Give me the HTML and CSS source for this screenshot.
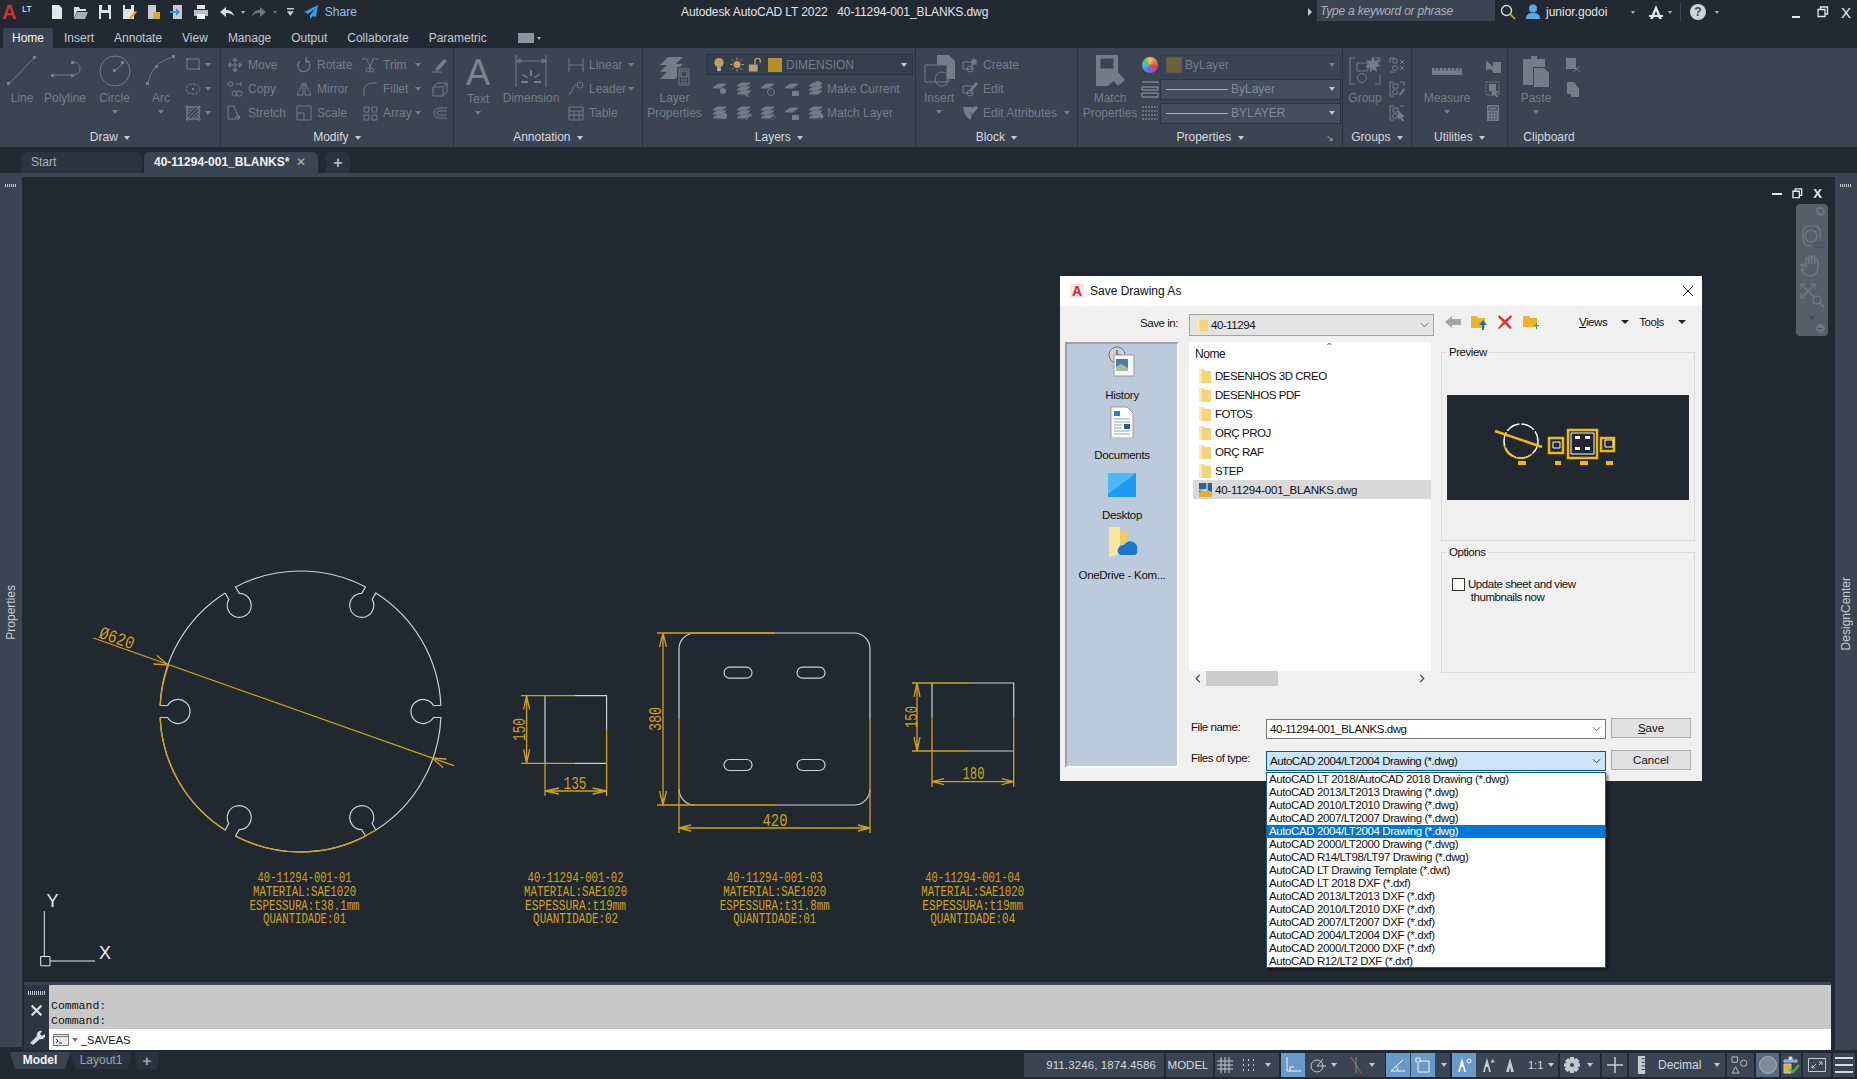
FILE: index.html
```html
<!DOCTYPE html>
<html lang="en">
<head>
  <meta charset="UTF-8" />
  <title>Autodesk AutoCAD LT 2022 - 40-11294-001_BLANKS.dwg</title>
  <link rel="stylesheet" href="styles.css">
</head>
<body>
  <svg class="defs" width="0" height="0">
    <symbol id="folder" viewBox="0 0 14 16">
      <path d="M1 1h5l1 2h6v12H1z" fill="#f7dc85"/>
      <path d="M1 1h3v14H1z" fill="#fbeab0"/>
      <path d="M4 3h9v12H4z" fill="#f5d577"/>
    </symbol>
    <symbol id="layer" viewBox="0 0 16 16">
      <path d="M1 7l5-4h8l-5 4z" fill="#727b88"/>
    </symbol>
    <symbol id="stack" viewBox="0 0 16 16">
      <path d="M1 5l4-3h9l-4 3zM1 9l4-3h9l-4 3zM1 13l4-3h9l-4 3z" fill="#727b88"/>
    </symbol>
  </svg>

  <!-- title bar -->
  <div class="titlebar">
    <div class="tb-left">
      <span class="logo-a">A</span><span class="logo-lt">LT</span>
      <div class="qat">
        <svg class="qi" viewBox="0 0 16 16"><path d="M3 1h7l3 3v11H3z" fill="#e3e5e8"/></svg>
        <svg class="qi" viewBox="0 0 16 16"><path d="M1 3h5l1 2h6v2H4l-3 7z" fill="#dfe1e4"/><path d="M4 8h11l-3 7H1z" fill="#a7adb5"/></svg>
        <svg class="qi" viewBox="0 0 16 16"><path d="M2 1h12v14H2z" fill="#dfe1e4"/><path d="M5 1h6v5H5zM4 9h8v6H4z" fill="#232a35"/></svg>
        <svg class="qi" viewBox="0 0 16 16"><path d="M2 1h11v14H2z" fill="#dfe1e4"/><path d="M4 1h6v4H4z" fill="#232a35"/><path d="M8 14l6-7 2 1-6 7z" fill="#e0a030"/></svg>
        <svg class="qi" viewBox="0 0 16 16"><path d="M3 1h8v14H3z" fill="#c7cbd0"/><path d="M8 8h7v7H8z" fill="#e2a72e"/></svg>
        <svg class="qi" viewBox="0 0 16 16"><path d="M4 1h9v14H4z" fill="#c7cbd0"/><path d="M1 7h6V4l4 4-4 4V9H1z" fill="#3d8fd6"/></svg>
        <svg class="qi" viewBox="0 0 16 16"><path d="M4 1h8v4H4z" fill="#e6e8ea"/><path d="M1 6h14v6H1z" fill="#b9bec5"/><path d="M4 10h8v5H4z" fill="#eef0f2"/></svg>
      </div>
      <svg class="qi undo" viewBox="0 0 16 16"><path d="M1 8l6-5v3c4 0 7 2 8 6-2-2-4-3-8-3v4z" fill="#d8dbdf"/></svg><span class="tri small"></span>
      <svg class="qi redo" viewBox="0 0 16 16"><path d="M15 8L9 3v3C5 6 2 8 1 12c2-2 4-3 8-3v4z" fill="#6d7581"/></svg><span class="tri small dim"></span>
      <span class="qat-more"></span>
      <svg class="qi share-ic" viewBox="0 0 16 16"><path d="M15 1L1 8l4 2 8-6-6 7v4l3-3 3 1z" fill="#3d9be0"/></svg>
      <span class="share">Share</span>
    </div>
    <div class="tb-title">Autodesk AutoCAD LT 2022 &nbsp; 40-11294-001_BLANKS.dwg</div>
    <div class="tb-right">
      <span class="tri-right"></span>
      <div class="search">Type a keyword or phrase</div>
      <svg class="qi mag" viewBox="0 0 16 16"><circle cx="6.5" cy="6.5" r="5" fill="none" stroke="#d8dbdf" stroke-width="1.4"/><path d="M10 10l5 5" stroke="#e0a030" stroke-width="1.6"/></svg>
      <svg class="qi user" viewBox="0 0 16 16"><circle cx="8" cy="4.5" r="4" fill="#5aa9e6"/><path d="M1 15c0-5 3-6 7-6s7 1 7 6z" fill="#5aa9e6"/></svg>
      <span class="username">junior.godoi</span>
      <span class="tri small user-tri"></span>
      <svg class="qi acad" viewBox="0 0 16 16"><path d="M8 1l6 14h-3L8 7l-3 8H2z" fill="#e3e5e8"/><path d="M1 11h14v2H1z" fill="#e3e5e8"/></svg>
      <span class="tri small"></span>
      <span class="tb-sep"></span>
      <span class="help">?</span>
      <span class="tri small"></span>
      <span class="win-min"></span>
      <svg class="win-res" viewBox="0 0 12 12"><path d="M3.5 3V1h7v7H8.5M1 3.5h7v7H1z" fill="none" stroke="#e3e5e8" stroke-width="1.3"/></svg>
      <span class="win-close">X</span>
    </div>
  </div>

  <!-- ribbon tabs -->
  <div class="rtabs">
    <span class="rtab active">Home</span>
    <span class="rtab">Insert</span>
    <span class="rtab">Annotate</span>
    <span class="rtab">View</span>
    <span class="rtab">Manage</span>
    <span class="rtab">Output</span>
    <span class="rtab">Collaborate</span>
    <span class="rtab">Parametric</span>
    <span class="rtab-btn"><span class="rtab-btn-box"></span><span class="tri small"></span></span>
  </div>

  <!-- ribbon -->
  <div class="ribbon">
    <section class="panel p-draw">
      <div class="panel-body">
        <div class="big w-44">
          <svg viewBox="0 0 32 32"><path d="M3 29L28 3"/><path class="solid" d="M1 27h3v3H1zM27 1h3v3h-3z"/></svg>
          <span>Line</span>
        </div>
        <div class="big w-42">
          <svg viewBox="0 0 32 32"><path d="M4 20h20c5 0 7-3 7-6s-2-7-7-7"/><path class="solid" d="M2 19h3v3H2zM22 19h3v3h-3zM22 6h3v3h-3z"/></svg>
          <span>Polyline</span>
        </div>
        <div class="big w-57">
          <svg viewBox="0 0 32 32"><circle cx="16" cy="16" r="15"/><path d="M16 16l8-8"/><path class="solid" d="M14 14h3v3h-3zM22 6h3v3h-3z"/></svg>
          <span>Circle</span><i class="tri big-tri"></i>
        </div>
        <div class="big w-36">
          <svg viewBox="0 0 32 32"><path d="M3 29C5 15 14 5 29 2"/><path class="solid" d="M1 27h3v3H1zM10 10h3v3h-3zM27 0h3v3h-3z"/></svg>
          <span>Arc</span><i class="tri big-tri"></i>
        </div>
        <div class="col w-36">
          <div class="tool"><svg viewBox="0 0 16 16"><path d="M2 2h12v10H2z"/><path class="solid" d="M1 1h2v2H1zM13 11h2v2h-2z"/></svg><i class="tri push"></i></div>
          <div class="tool"><svg viewBox="0 0 16 16"><ellipse cx="8" cy="8" rx="7" ry="5" stroke-dasharray="3 1"/><path class="solid" d="M7 7h2v2H7z"/></svg><i class="tri push"></i></div>
          <div class="tool"><svg viewBox="0 0 16 16"><path d="M2 2h12v12H2zM0 2h16M0 14h16M2 0v16M14 0v16M3 13L13 3M3 9l6-6M7 13l6-6M3 6l3-3M10 13l3-3"/></svg><i class="tri push"></i></div>
        </div>
      </div>
      <div class="panel-title">Draw <i class="tri light"></i></div>
    </section>

    <section class="panel p-modify">
      <div class="panel-body">
        <div class="col w-69">
          <div class="tool"><svg viewBox="0 0 16 16"><path d="M8 1v14M1 8h14M8 1L6 3.5h4zM8 15l-2-2.5h4zM1 8l2.5-2v4zM15 8l-2.5-2v4z"/></svg><span>Move</span></div>
          <div class="tool"><svg viewBox="0 0 16 16"><rect x="1" y="1" width="5" height="4" rx="2"/><rect x="5" y="10" width="5" height="5" rx="2.5"/><rect x="9" y="10" width="6" height="5" rx="2.5"/><path d="M9 3h6l-2-2M15 3l-2 2"/></svg><span>Copy</span></div>
          <div class="tool"><svg viewBox="0 0 16 16"><path d="M1 1h6l5 13H1zM8 12h5M11 10l2 2-2 2"/></svg><span>Stretch</span></div>
        </div>
        <div class="col w-66">
          <div class="tool"><svg viewBox="0 0 16 16"><path d="M10 3a6 6 0 1 1-6 1M10 0v5H14" stroke-width="1.2"/></svg><span>Rotate</span></div>
          <div class="tool"><svg viewBox="0 0 16 16"><path d="M7 2L1 14h6zM9 2l6 12H9z"/></svg><span>Mirror</span></div>
          <div class="tool"><svg viewBox="0 0 16 16"><path d="M1 1h14v14H1zM1 8h7v7"/></svg><span>Scale</span></div>
        </div>
        <div class="col w-63">
          <div class="tool"><svg viewBox="0 0 16 16"><path d="M4 1l5 10M12 1L7 11M0 2h3M13 2h3"/><circle cx="6" cy="13" r="2"/><circle cx="10" cy="13" r="2"/></svg><span>Trim</span><i class="tri push"></i></div>
          <div class="tool"><svg viewBox="0 0 16 16"><path d="M2 15V10C2 5 6 2 10 2h5"/></svg><span>Fillet</span><i class="tri push"></i></div>
          <div class="tool"><svg viewBox="0 0 16 16"><path d="M2 2h5v5H2zM10 2h5v5h-5zM2 10h5v5H2zM10 10h5v5h-5z"/></svg><span>Array</span><i class="tri push"></i></div>
        </div>
        <div class="col ml-7">
          <div class="tool"><svg viewBox="0 0 16 16"><path d="M0 15h10"/><path class="solid" d="M4 11l8-9 3 2-8 9-4 1z"/></svg></div>
          <div class="tool"><svg viewBox="0 0 16 16"><path d="M1 6h10v9H1zM1 6l4-4h10v9l-4 4M11 6l4-4"/></svg></div>
          <div class="tool"><svg viewBox="0 0 16 16"><path d="M15 3H7a5 5 0 0 0 0 10h8M15 6H7a2 2 0 0 0 0 4h8"/></svg></div>
        </div>
      </div>
      <div class="panel-title">Modify <i class="tri light"></i></div>
    </section>

    <section class="panel p-anno">
      <div class="panel-body">
        <div class="big w-48">
          <span class="big-a">A</span>
          <span>Text</span><i class="tri big-tri"></i>
        </div>
        <div class="big w-58">
          <svg viewBox="0 0 32 32"><path d="M1 0v32M31 0v32M1 6h30M1 6l4-2v4zM31 6l-4-2v4z"/><path class="solid" d="M15 15h2v6h-2zM8 19l5 3-1 1-5-3zM24 19l-5 3 1 1 5-3zM6 26h7v2H6zM19 26h7v2h-7z"/></svg>
          <span>Dimension</span>
        </div>
        <div class="col w-70 ml-8">
          <div class="tool"><svg viewBox="0 0 16 16"><path d="M1 1v14M15 1v14M1 8h14"/></svg><span>Linear</span><i class="tri push"></i></div>
          <div class="tool"><svg viewBox="0 0 16 16"><circle cx="12" cy="4" r="3"/><path d="M9 4C5 4 5 8 4 10L1 14"/></svg><span>Leader</span><i class="tri push"></i></div>
          <div class="tool"><svg viewBox="0 0 16 16"><path d="M1 2h14v13H1zM1 6h14M1 10h14M6 6v9M11 6v9"/></svg><span>Table</span></div>
        </div>
      </div>
      <div class="panel-title">Annotation <i class="tri light"></i></div>
    </section>

    <section class="panel p-layers">
      <div class="panel-body">
        <div class="big w-63">
          <svg viewBox="0 0 32 32"><path class="solid" d="M1 10l8-8h15l-8 8zM1 17l8-8h15l-8 8zM1 24l8-8h15l-8 8z"/><path class="panelfill" d="M18 12h13v20H18z"/><path d="M20 14h10v16H20zM22 16h6v6h-6zM22 25h6M22 28h6"/></svg>
          <span class="two">Layer<br>Properties</span>
        </div>
        <div class="col w-207">
          <div class="rcombo layer-combo">
            <svg class="bulb" viewBox="0 0 14 16"><circle cx="7" cy="6" r="5" fill="#b8a268"/><path d="M5 11h4v4H5z" fill="#aeb4bc"/></svg>
            <svg class="bulb" viewBox="0 0 16 16"><circle cx="8" cy="8" r="4" fill="#b8a268"/><path d="M8 0v3M8 13v3M0 8h3M13 8h3M2 2l2 2M12 12l2 2M2 14l2-2M12 4l2-2" stroke="#b8a268"/></svg>
            <svg class="bulb" viewBox="0 0 16 16"><path d="M1 8h10v8H1z" fill="#b8a268"/><path d="M8 8V4a3 3 0 0 1 6 0v2" fill="none" stroke="#b8a268" stroke-width="1.5"/></svg>
            <span class="swatch yellow"></span>
            <span class="rcombo-text">DIMENSION</span>
            <i class="tri light push"></i>
          </div>
          <div class="tool layer-row">
            <svg viewBox="0 0 16 16"><use href="#layer"/><circle class="solid" cx="11" cy="10" r="3"/></svg>
            <svg viewBox="0 0 16 16"><use href="#stack"/><path d="M15 9l-5 6M10 12v3h3"/></svg>
            <svg viewBox="0 0 16 16"><use href="#layer"/><circle cx="11" cy="11" r="3.5"/></svg>
            <svg viewBox="0 0 16 16"><use href="#layer"/><path class="solid" d="M8 10h7v5H8z"/></svg>
            <svg viewBox="0 0 16 16"><use href="#stack"/><circle class="solid" cx="10" cy="3" r="3"/></svg>
            <span>Make Current</span>
          </div>
          <div class="tool layer-row">
            <svg viewBox="0 0 16 16"><use href="#stack"/><circle class="solid" cx="12" cy="11" r="3"/></svg>
            <svg viewBox="0 0 16 16"><use href="#stack"/><path d="M10 15l5-6M12 9h3v3"/></svg>
            <svg viewBox="0 0 16 16"><use href="#stack"/><circle cx="12" cy="12" r="2.5" stroke-dasharray="1 1"/></svg>
            <svg viewBox="0 0 16 16"><use href="#layer"/><path class="solid" d="M8 10h7v5H8z"/></svg>
            <svg viewBox="0 0 16 16"><use href="#stack"/><path class="solid" d="M9 8l3-2 4 6-3 2z"/></svg>
            <span>Match Layer</span>
          </div>
        </div>
      </div>
      <div class="panel-title">Layers <i class="tri light"></i></div>
    </section>

    <section class="panel p-block">
      <div class="panel-body">
        <div class="big w-46">
          <svg viewBox="0 0 32 32"><path class="solid" d="M14 0h12l6 6v18H14z"/><path class="panelfill" d="M2 10h22v17H2z"/><path d="M2 10h22v17H2z"/><circle cx="19" cy="24" r="7"/></svg>
          <span>Insert</span><i class="tri big-tri"></i>
        </div>
        <div class="col w-112">
          <div class="tool"><svg viewBox="0 0 16 16"><path d="M1 5h9v7H1z"/><circle cx="8" cy="12" r="3"/><path class="solid" d="M12 1l1 2 2-1-1 2 2 1-2 1 1 2-2-1-1 2-1-2-2 1 1-2-2-1 2-1-1-2 2 1z"/></svg><span>Create</span></div>
          <div class="tool"><svg viewBox="0 0 16 16"><path d="M1 5h9v7H1z"/><circle cx="8" cy="12" r="3"/><path class="solid" d="M8 8l6-7 2 2-6 7-3 1z"/></svg><span>Edit</span></div>
          <div class="tool"><svg viewBox="0 0 16 16"><path class="solid" d="M1 2h9l1 4-3 2 2 3-2 4-5-5zM11 2l4-1 1 2-6 7-1-2z"/></svg><span>Edit Attributes</span><i class="tri push"></i></div>
        </div>
      </div>
      <div class="panel-title">Block <i class="tri light"></i></div>
    </section>

    <section class="panel p-props">
      <div class="panel-body">
        <div class="big w-64">
          <svg viewBox="0 0 32 32"><path class="solid" d="M2 0h22v22L14 31H2z"/><path class="panelfill" d="M6 3h14v11H6z"/><path d="M6 3h14v11H6zM6 20h4M8 18v4M14 20h4"/><path class="solid" d="M18 24l7-6 6 7-7 6z"/></svg>
          <span class="two">Match<br>Properties</span>
        </div>
        <div class="col w-199">
          <div class="tool combo-row">
            <span class="wheel"></span>
            <div class="rcombo off"><span class="swatch brown"></span><span class="rcombo-text">ByLayer</span><i class="tri push"></i></div>
          </div>
          <div class="tool combo-row">
            <svg viewBox="0 0 16 16"><path class="lit" d="M0 1h16v1M0 6h16v3H0zM0 12h16v4H0z"/></svg>
            <div class="rcombo"><span class="ln"></span><span class="rcombo-text">ByLayer</span><i class="tri light push"></i></div>
          </div>
          <div class="tool combo-row">
            <svg viewBox="0 0 16 16"><path class="lit" d="M0 2h16M0 6h16M0 10h16M0 14h16" stroke-dasharray="2 1" fill="none"/></svg>
            <div class="rcombo"><span class="ln"></span><span class="rcombo-text">BYLAYER</span><i class="tri light push"></i></div>
          </div>
        </div>
      </div>
      <div class="panel-title">Properties <i class="tri light"></i><span class="corner">&#8600;</span></div>
    </section>

    <section class="panel p-groups">
      <div class="panel-body">
        <div class="big w-44">
          <svg viewBox="0 0 32 32"><path d="M6 3H1v26h5M26 3h5v4M26 29h5v-10"/><path d="M8 8h11v8H8z"/><circle cx="13" cy="23" r="4.5"/><path class="solid" d="M24 1l2 5 5-2-2 5 3 2-5 1 1 5-4-3-3 4v-5l-5-1 4-3-3-4 5 1z"/></svg>
          <span>Group</span>
        </div>
        <div class="col ml-2">
          <div class="tool"><svg viewBox="0 0 16 16"><path d="M1 1h5M1 15h5M1 1v5M4 2h4v4H4z"/><circle cx="6" cy="11" r="2.5"/><path d="M11 3l4 4M15 3l-4 4M11 9l4 4M15 9l-4 4"/></svg></div>
          <div class="tool"><svg viewBox="0 0 16 16"><path d="M5 1H1v14h4M11 1h4v4"/><path d="M4 3h5v4H4z"/><circle cx="6" cy="11" r="2.5"/><path class="solid" d="M10 13l5-6 1 2-5 6z"/></svg></div>
          <div class="tool"><svg viewBox="0 0 16 16"><path d="M5 1H1v14h4M11 1h4"/><path d="M4 3h5v4H4z"/><circle cx="6" cy="11" r="2.5"/><path class="solid" d="M9 5l7 7h-3l2 4-2 0-2-3-2 2z"/></svg></div>
        </div>
      </div>
      <div class="panel-title">Groups <i class="tri light"></i></div>
    </section>

    <section class="panel p-util">
      <div class="panel-body">
        <div class="big w-70">
          <svg viewBox="0 0 32 32"><path class="solid" d="M1 13h30v7H1z"/><path class="panelline" d="M4 13v3M8 13v3M12 13v3M16 13v3M20 13v3M24 13v3M28 13v3"/></svg>
          <span>Measure</span><i class="tri big-tri"></i>
        </div>
        <div class="col ml-3">
          <div class="tool"><svg viewBox="0 0 16 16"><path class="solid" d="M8 5h8v11H8zM1 3l7 7v4l-3-2-4 1z"/></svg></div>
          <div class="tool"><svg viewBox="0 0 16 16"><path d="M1 1h13v13H1z" stroke-dasharray="2 1"/><path class="solid" d="M4 3h7v7H4zM6 5l8 7h-3l2 4-2 0-2-3-2 2z"/></svg></div>
          <div class="tool"><svg viewBox="0 0 16 16"><path class="solid" d="M2 0h12v16H2z"/><path class="panelline" d="M4 2h8v3H4zM4 8h2M7 8h2M10 8h2M4 11h2M7 11h2M10 11h2M4 14h2M7 14h2M10 14h2"/></svg></div>
        </div>
      </div>
      <div class="panel-title">Utilities <i class="tri light"></i></div>
    </section>

    <section class="panel p-clip">
      <div class="panel-body">
        <div class="big w-56">
          <svg viewBox="0 0 32 32"><path class="solid" d="M3 4h8V1h6v3h8v8H3zM3 12h10v18H3z"/><path class="solid" d="M14 13h10l5 5v14H14z"/></svg>
          <span>Paste</span><i class="tri big-tri"></i>
        </div>
        <div class="col ml-1">
          <div class="tool"><svg viewBox="0 0 16 16"><path class="solid" d="M1 1h10v11H1z"/><path d="M8 9l7 6M15 9l-7 6"/></svg></div>
          <div class="tool"><svg viewBox="0 0 16 16"><path class="solid" d="M2 1h7l2 2v10H2zM6 5h6l2 2v9H6z"/></svg></div>
        </div>
      </div>
      <div class="panel-title">Clipboard</div>
    </section>
  </div>

  <!-- drawing tabs -->
  <div class="doctabs">
    <div class="doctab start">Start</div>
    <div class="doctab current">40-11294-001_BLANKS*<span class="doc-x">&#10005;</span></div>
    <div class="doctab plus">+</div>
  </div>

  <div class="workspace">
    <aside class="palette"><span class="grip"></span><span class="palette-name">Properties</span></aside>

    <div class="center">
      <main class="canvas">
        <svg class="drawing" viewBox="22 177 1813 805">
          <defs>
            <path id="notch" d="M140.37 -6 L132.89 -6 A12 12 0 1 0 132.89 6 L140.37 6 A140.5 140.5 0 0 1 75.38 118.56"/>
            <path id="segment" d="M140.37 6 A140.5 140.5 0 0 1 75.38 118.56"/>
          </defs>

          <!-- part 01 -->
          <g class="white" transform="translate(300.5 711.5)">
            <use href="#notch"/>
            <use href="#notch" transform="rotate(60)"/>
            <use href="#notch" transform="rotate(120)"/>
            <use href="#notch" transform="rotate(180)"/>
            <use href="#notch" transform="rotate(240)"/>
            <use href="#notch" transform="rotate(300)"/>
          </g>
          <g class="yel" transform="translate(300.5 711.5)">
            <use href="#segment" transform="rotate(60)"/>
            <use href="#segment" transform="rotate(120)"/>
            <path d="M-140.37 -6 A140.5 140.5 0 0 1 -132 -46.5"/>
            <path d="M75.38 118.56 A140.5 140.5 0 0 0 64 125"/>
          </g>
          <g class="yel">
            <path d="M93.4 638L454 765.7"/>
            <path d="M168 665l-11-9.5M168 665l-14.5-1M432 758l11 9.5M432 758l14.5 1"/>
          </g>
          <text class="dim" x="98" y="637.5" transform="rotate(19.5 98 637.5)" textLength="36" lengthAdjust="spacingAndGlyphs">&#216;620</text>

          <!-- part 02 -->
          <g class="white"><path d="M545 695.7V763.3M575 695.7H606.6V729M575 763.3H606.6"/></g>
          <g class="yel">
            <path d="M521 695.7H575M521 763.3H575M606.6 729V796M545 763.3V796"/>
            <path d="M526.6 695.7V763.3M526.6 695.7l-3 14M526.6 695.7l3 14M526.6 763.3l-3-14M526.6 763.3l3-14"/>
            <path d="M545 791H606.6M545 791l14-3M545 791l14 3M606.6 791l-14-3M606.6 791l-14 3"/>
          </g>
          <text class="dim" x="0" y="0" transform="translate(525 741) rotate(-90)" textLength="23" lengthAdjust="spacingAndGlyphs">150</text>
          <text class="dim mid" x="575" y="789" textLength="23" lengthAdjust="spacingAndGlyphs">135</text>

          <!-- part 03 -->
          <g class="white">
            <path d="M679 719V649a16 16 0 0 1 16-16H854a16 16 0 0 1 16 16V719M775 805H854a16 16 0 0 0 16-16"/>
            <path d="M679 789a16 16 0 0 0 16 16"/>
            <rect x="724" y="667.2" width="28" height="11" rx="5.5"/>
            <rect x="797" y="667.2" width="28" height="11" rx="5.5"/>
            <rect x="724" y="759.5" width="28" height="11" rx="5.5"/>
            <rect x="797" y="759.5" width="28" height="11" rx="5.5"/>
          </g>
          <g class="yel">
            <path d="M657 633H775M657 805H775M679 719V833M870 719V833"/>
            <path d="M663 633V805M663 633l-3.5 14M663 633l3.5 14M663 805l-3.5-14M663 805l3.5-14"/>
            <path d="M679 828H870M679 828l12-3M679 828l12 3M870 828l-12-3M870 828l-12 3"/>
          </g>
          <text class="dim" x="0" y="0" transform="translate(661 731) rotate(-90)" textLength="24" lengthAdjust="spacingAndGlyphs">380</text>
          <text class="dim mid" x="775" y="826" textLength="25" lengthAdjust="spacingAndGlyphs">420</text>

          <!-- part 04 -->
          <g class="white"><path d="M932 717V683M972 683H1013.7V717M972 751H1013.7"/></g>
          <g class="yel">
            <path d="M912 683H972M912 751H972M932 717V787M1013.7 717V787"/>
            <path d="M917 683V751M917 683l-3 14M917 683l3 14M917 751l-3-14M917 751l3-14"/>
            <path d="M932 781.7H1013.7M932 781.7l12-3M932 781.7l12 3M1013.7 781.7l-12-3M1013.7 781.7l-12 3"/>
          </g>
          <text class="dim" x="0" y="0" transform="translate(916.5 728) rotate(-90)" textLength="22" lengthAdjust="spacingAndGlyphs">150</text>
          <text class="dim mid" x="973.5" y="779" textLength="22" lengthAdjust="spacingAndGlyphs">180</text>

          <!-- part labels -->
          <g class="note">
            <text x="304.6" y="882" textLength="94" lengthAdjust="spacingAndGlyphs">40-11294-001-01</text>
            <text x="304.6" y="896" textLength="103" lengthAdjust="spacingAndGlyphs">MATERIAL:SAE1020</text>
            <text x="304.6" y="909.5" textLength="110" lengthAdjust="spacingAndGlyphs">ESPESSURA:t38.1mm</text>
            <text x="304.6" y="923" textLength="83" lengthAdjust="spacingAndGlyphs">QUANTIDADE:01</text>

            <text x="575.6" y="882" textLength="96" lengthAdjust="spacingAndGlyphs">40-11294-001-02</text>
            <text x="575.6" y="896" textLength="103" lengthAdjust="spacingAndGlyphs">MATERIAL:SAE1020</text>
            <text x="575.6" y="909.5" textLength="101" lengthAdjust="spacingAndGlyphs">ESPESSURA:t19mm</text>
            <text x="575.6" y="923" textLength="85" lengthAdjust="spacingAndGlyphs">QUANTIDADE:02</text>

            <text x="774.7" y="882" textLength="96" lengthAdjust="spacingAndGlyphs">40-11294-001-03</text>
            <text x="774.7" y="896" textLength="103" lengthAdjust="spacingAndGlyphs">MATERIAL:SAE1020</text>
            <text x="774.7" y="909.5" textLength="110" lengthAdjust="spacingAndGlyphs">ESPESSURA:t31.8mm</text>
            <text x="774.7" y="923" textLength="83" lengthAdjust="spacingAndGlyphs">QUANTIDADE:01</text>

            <text x="972.7" y="882" textLength="95" lengthAdjust="spacingAndGlyphs">40-11294-001-04</text>
            <text x="972.7" y="896" textLength="103" lengthAdjust="spacingAndGlyphs">MATERIAL:SAE1020</text>
            <text x="972.7" y="909.5" textLength="101" lengthAdjust="spacingAndGlyphs">ESPESSURA:t19mm</text>
            <text x="972.7" y="923" textLength="85" lengthAdjust="spacingAndGlyphs">QUANTIDADE:04</text>
          </g>

          <!-- ucs -->
          <g class="ucs">
            <path d="M44.3 911V956.5M50 961H95M40.7 956.5h9.3v9.3h-9.3z"/>
            <text x="52.5" y="907">Y</text>
            <text x="105" y="959">X</text>
          </g>
        </svg>

        <div class="vp-controls">
          <span class="vp-min"></span>
          <svg class="vp-res" viewBox="0 0 12 12"><path d="M3.5 3V1h7v7H8.5M1 3.5h7v7H1z" fill="none" stroke="#e3e5e8" stroke-width="1.5"/></svg>
          <span class="vp-close">X</span>
        </div>

        <div class="navbar">
          <span class="nav-x">&#215;</span>
          <svg class="nav-ic" viewBox="0 0 26 26"><circle cx="12" cy="12" r="6"/><path d="M4 14V7a5 5 0 0 1 5-5h7a5 5 0 0 1 5 5v8M4 14c0 5 3 8 7 8h2"/><text x="15" y="24">2D</text></svg>
          <svg class="nav-ic" viewBox="0 0 26 26"><path d="M5 17L2 12l2-1 3 3V5l2 0 1 6V3h2l1 8V3h2l1 8 0-6h2l1 8c0 6-2 10-8 10-4 0-6-2-9-6z"/></svg>
          <svg class="nav-ic" viewBox="0 0 26 26"><path d="M2 2l13 13M2 2h5M2 2v5M16 2L2 16M16 2h-5M16 2v5M2 16h5M2 16v-5M21 21l4 4"/><circle cx="18" cy="18" r="4"/></svg>
          <span class="tri nav-tri"></span>
          <span class="nav-end">&#8722;</span>
        </div>

        <!-- save dialog -->
        <div class="dlg">
          <div class="dlg-title">
            <span class="dlg-logo">A</span>
            <span>Save Drawing As</span>
            <svg class="dlg-close" viewBox="0 0 12 12"><path d="M1 1l10 10M11 1L1 11" stroke="#222" stroke-width="1"/></svg>
          </div>

          <div class="dlg-top">
            <label class="savein">Save in:</label>
            <div class="combo grey">
              <svg class="fold" viewBox="0 0 14 16"><use href="#folder"/></svg>
              <span>40-11294</span>
              <svg class="chev" viewBox="0 0 10 6"><path d="M1 1l4 4 4-4" fill="none" stroke="#555"/></svg>
            </div>
            <svg class="dt-ic back" viewBox="0 0 16 16"><path d="M0 8l7-6v3h9v6H7v3z" fill="#a5a5a5"/></svg>
            <svg class="dt-ic" viewBox="0 0 16 16"><path d="M0 2h6l1 2h7v10H0z" fill="#f0b429"/><path d="M12 6l4 5h-3v5h-2v-5H8z" fill="#1d6fc4"/></svg>
            <svg class="dt-ic" viewBox="0 0 16 16"><path d="M2 1l6 5 6-5 1 2-5 5 5 6-2 1-5-5-6 5-1-1 5-6L1 3z" fill="#e03428"/></svg>
            <svg class="dt-ic" viewBox="0 0 16 16"><path d="M0 2h6l1 2h7v9H0z" fill="#f0b429"/><path d="M11 11h2V9h1v2h2v1h-2v3h-1v-3h-2z" fill="#2fa84f"/></svg>
            <span class="dt-menu views"><u>V</u>iews</span><span class="dt-tri"></span>
            <span class="dt-menu">Too<u>l</u>s</span><span class="dt-tri"></span>
          </div>

          <div class="dlg-main">
            <nav class="places">
              <div class="place">
                <svg viewBox="0 0 32 32"><circle cx="11" cy="9" r="8" fill="#cfd3d6" stroke="#777"/><path d="M11 4v5h4" fill="none" stroke="#333"/><path d="M8 9h20v21H8z" fill="#f4f6f8" stroke="#99a"/><path d="M10 13h12v12H10z" fill="#4f7f9b"/><path d="M10 21l5-3 7 4v3H10z" fill="#9fc1a0"/></svg>
                <span>History</span>
              </div>
              <div class="place">
                <svg viewBox="0 0 32 32"><path d="M5 1h16l6 6v25H5z" fill="#fff" stroke="#99a"/><path d="M8 5h6v5H8z" fill="#2d7fc9"/><path d="M8 13h16M8 16h16M8 19h8M8 22h8M8 25h16M8 28h16" stroke="#8aa"/><path d="M18 18h6v5h-6z" fill="#2b5f7a"/></svg>
                <span>Documents</span>
              </div>
              <div class="place">
                <svg viewBox="0 0 32 32"><path d="M2 7h28v24H2z" fill="#1e9af0"/><path d="M2 7h28L2 28z" fill="#4cb8fa"/></svg>
                <span>Desktop</span>
              </div>
              <div class="place">
                <svg viewBox="0 0 32 32"><path d="M3 1h11v27l-11 3z" fill="#fbe6a0"/><path d="M14 5h7v12h-7z" fill="#f2cb62"/><path d="M12 27a6 6 0 0 1 6-8 7 7 0 0 1 13 5 4 4 0 0 1-2 5H14z" fill="#1b78c9"/></svg>
                <span>OneDrive - Kom...</span>
              </div>
            </nav>

            <div class="dlg-right">
              <div class="browse">
                <div class="filelist">
                  <div class="list">
                    <div class="list-head">Nome<span class="sort">&#8963;</span></div>
                    <div class="row"><svg viewBox="0 0 14 16"><use href="#folder"/></svg>DESENHOS 3D CREO</div>
                    <div class="row"><svg viewBox="0 0 14 16"><use href="#folder"/></svg>DESENHOS PDF</div>
                    <div class="row"><svg viewBox="0 0 14 16"><use href="#folder"/></svg>FOTOS</div>
                    <div class="row"><svg viewBox="0 0 14 16"><use href="#folder"/></svg>OR&Ccedil; PROJ</div>
                    <div class="row"><svg viewBox="0 0 14 16"><use href="#folder"/></svg>OR&Ccedil; RAF</div>
                    <div class="row"><svg viewBox="0 0 14 16"><use href="#folder"/></svg>STEP</div>
                    <div class="row sel"><svg viewBox="0 0 14 16"><path d="M1 1h13v9H1z" fill="#2b5f9e"/><path d="M1 10l6-3 7 3v5H1z" fill="#e5ac2f"/><path d="M1 8h8V1" fill="none" stroke="#fff"/></svg>40-11294-001_BLANKS.dwg</div>
                  </div>
                  <div class="hscroll">
                    <svg class="sc-arrow" viewBox="0 0 6 10"><path d="M5 1L1 5l4 4" fill="none" stroke="#444" stroke-width="1.3"/></svg>
                    <span class="sc-thumb"></span>
                    <svg class="sc-arrow right" viewBox="0 0 6 10"><path d="M1 1l4 4-4 4" fill="none" stroke="#444" stroke-width="1.3"/></svg>
                  </div>
                </div>
                <div class="side">
                  <fieldset class="group preview">
                    <legend>Preview</legend>
                    <svg class="thumb" viewBox="1447 395 242 105">
                      <rect x="1447" y="395" width="242" height="105" fill="#212830"/>
                      <circle cx="1521" cy="441" r="17" fill="none" stroke="#fff" stroke-width="1.5" stroke-dasharray="14 2"/>
                      <path d="M1504 445a17 17 0 0 0 28 9" fill="none" stroke="#f5b800" stroke-width="1.5"/>
                      <path d="M1495 431l47 16" stroke="#f5b800" stroke-width="2.5"/>
                      <path d="M1549 438h14v15h-14z" fill="none" stroke="#f5b800" stroke-width="2.5"/>
                      <path d="M1553 442h7v6h-7z" fill="none" stroke="#fff"/>
                      <path d="M1568 430h29v28h-29z" fill="none" stroke="#f5b800" stroke-width="2.5"/>
                      <path d="M1571 433h23v21h-23z" fill="none" stroke="#fff"/>
                      <path d="M1575 436h5v3h-5zM1585 436h5v3h-5zM1575 447h5v3h-5zM1585 447h5v3h-5z" fill="#fff"/>
                      <path d="M1601 438h13v13h-13z" fill="none" stroke="#f5b800" stroke-width="2.5"/>
                      <path d="M1605 440h8v7h-8z" fill="none" stroke="#fff"/>
                      <path d="M1518 461h8v4h-8zM1555 461h6v4h-6zM1580 461h8v4h-8zM1606 461h7v4h-7z" fill="#f5b800"/>
                    </svg>
                  </fieldset>
                  <fieldset class="group options">
                    <legend>Options</legend>
                    <label class="check"><span class="box"></span><span>Update sheet and view<br>&nbsp;thumbnails now</span></label>
                  </fieldset>
                </div>
              </div>

              <div class="form-row first">
                <label>File name:</label>
                <div class="combo input">
                  <span>40-11294-001_BLANKS.dwg</span>
                  <svg class="chev" viewBox="0 0 10 6"><path d="M1 1l4 4 4-4" fill="none" stroke="#555"/></svg>
                </div>
                <button class="btn"><u>S</u>ave</button>
              </div>
              <div class="form-row">
                <label class="type-label">Files of type:</label>
                <div class="combo focus">
                  <span>AutoCAD 2004/LT2004 Drawing (*.dwg)</span>
                  <svg class="chev" viewBox="0 0 10 6"><path d="M1 1l4 4 4-4" fill="none" stroke="#333"/></svg>
                </div>
                <button class="btn up">Cancel</button>
              </div>
            </div>
          </div>

          <ul class="dropdown">
            <li>AutoCAD LT 2018/AutoCAD 2018 Drawing (*.dwg)</li>
            <li>AutoCAD 2013/LT2013 Drawing (*.dwg)</li>
            <li>AutoCAD 2010/LT2010 Drawing (*.dwg)</li>
            <li>AutoCAD 2007/LT2007 Drawing (*.dwg)</li>
            <li class="on">AutoCAD 2004/LT2004 Drawing (*.dwg)</li>
            <li>AutoCAD 2000/LT2000 Drawing (*.dwg)</li>
            <li>AutoCAD R14/LT98/LT97 Drawing (*.dwg)</li>
            <li>AutoCAD LT Drawing Template (*.dwt)</li>
            <li>AutoCAD LT 2018 DXF (*.dxf)</li>
            <li>AutoCAD 2013/LT2013 DXF (*.dxf)</li>
            <li>AutoCAD 2010/LT2010 DXF (*.dxf)</li>
            <li>AutoCAD 2007/LT2007 DXF (*.dxf)</li>
            <li>AutoCAD 2004/LT2004 DXF (*.dxf)</li>
            <li>AutoCAD 2000/LT2000 DXF (*.dxf)</li>
            <li>AutoCAD R12/LT2 DXF (*.dxf)</li>
          </ul>
        </div>
      </main>

      <!-- command line -->
      <div class="cmd">
        <div class="cmd-tools">
          <span class="grip wide"></span>
          <svg viewBox="0 0 12 12"><path d="M1.5 1.5l9 9M10.5 1.5l-9 9" stroke="#d8dbdf" stroke-width="2"/></svg>
          <svg viewBox="0 0 16 16"><path d="M1 14l7-7a4 4 0 0 1 5-5l-2 3 2 2 3-2a4 4 0 0 1-5 5l-7 6z" fill="#d8dbdf"/></svg>
        </div>
        <div class="cmd-main">
          <div class="cmd-history">
            <div>Command:</div>
            <div>Command:</div>
          </div>
          <div class="cmd-input">
            <svg viewBox="0 0 16 12"><path d="M.5.5h15v11H.5z" fill="#e9e9e9" stroke="#777"/><path d="M.5 2.5h15" stroke="#777"/><path d="M3 5l2 2-2 2M6 9h3" fill="none" stroke="#333"/></svg>
            <i class="tri grey"></i>
            <span>_SAVEAS</span>
          </div>
        </div>
      </div>
    </div>

    <aside class="palette right"><span class="grip"></span><span class="palette-name">DesignCenter</span></aside>
  </div>

  <!-- status bar -->
  <footer class="status">
    <div class="layout-tabs">
      <span class="ltab model">Model</span>
      <span class="ltab">Layout1</span>
      <span class="ltab plus">+</span>
    </div>
    <div class="segs">
      <div class="seg s-coord">911.3246, 1874.4586</div>
      <div class="seg s-model">MODEL</div>
      <div class="seg s-grid">
        <svg viewBox="0 0 16 16"><path d="M0 4h16M0 8h16M0 12h16M4 0v16M8 0v16M12 0v16"/></svg>
        <svg viewBox="0 0 16 16"><path d="M2 3h1M7 3h1M12 3h1M2 8h1M7 8h1M12 8h1M2 13h1M7 13h1M12 13h1" stroke-width="2"/></svg>
        <i class="tri light"></i>
      </div>
      <div class="seg s-ortho">
        <span class="on-box"><svg viewBox="0 0 16 16"><path d="M2 0v14h14M5 14v-4h4"/></svg></span>
        <svg viewBox="0 0 16 16"><circle cx="7" cy="9" r="6"/><path d="M7 9h9M7 9l6-7"/></svg><i class="tri light"></i>
        <svg class="osnap" viewBox="0 0 16 16"><path d="M3 0l10 16" stroke="#e05a4d"/><path d="M8 0v16" stroke="#4caf6e"/></svg><i class="tri light"></i>
      </div>
      <div class="seg s-snap">
        <span class="on-box"><svg viewBox="0 0 16 16"><path d="M1 14L13 3M1 14h14M8 14a7 7 0 0 0-2-5"/></svg></span>
        <span class="on-box"><svg viewBox="0 0 16 16"><path d="M5 4h9v11H3V6M1 1h4v4H1z"/></svg></span>
        <i class="tri light"></i>
      </div>
      <div class="seg s-anno">
        <span class="on-box"><svg viewBox="0 0 16 16"><path class="fillit" d="M6 1l4 14H8L7 10H5l-1 5H2z"/><circle cx="13" cy="4" r="2"/></svg></span>
        <svg viewBox="0 0 16 16"><path class="fillit" d="M6 1l4 14H8L7 10H5l-1 5H2zM11 2l3 3-4 1z"/></svg>
        <svg viewBox="0 0 16 16"><path class="fillit" d="M8 1l4 14h-3L8 10l-1 5H4z"/></svg>
        <span class="scale">1:1</span><i class="tri light"></i>
      </div>
      <div class="seg s-gear">
        <svg viewBox="0 0 16 16"><path class="fillit" d="M6 0h4l.5 2.5 2-1.5 3 3-1.500 2L16 6.5v3l-2.500.5 1.500 2-3 3-2-1.500L10 16H6l-.5-2.500-2 1.500-3-3 1.500-2L0 9.5v-3L2.500 6 1 4l3-3 2 1.500z"/><circle cx="8" cy="8" r="2.5" fill="#3b4453"/></svg>
        <i class="tri light"></i>
      </div>
      <div class="seg s-plus"><svg viewBox="0 0 16 16"><path d="M8 0v16M0 8h16" stroke-width="1.5"/></svg></div>
      <div class="seg s-units">
        <svg viewBox="0 0 10 20"><path class="fillit" d="M1 0h8v20H1z"/><path d="M5 3h4M5 7h4M5 11h4M5 15h4" stroke="#333c4a"/></svg>
        <span>Decimal</span><i class="tri light"></i>
      </div>
      <div class="seg s-iso"><svg viewBox="0 0 24 20"><path d="M2 1h6v6H2zM6 12l4 7H2z"/><circle cx="15" cy="8" r="3.5"/></svg></div>
      <div class="seg s-hw"><span class="hw"></span></div>
      <div class="seg s-ok"><svg viewBox="0 0 18 18"><path d="M7 1h3v3H7z" fill="#e4e7ea"/><path d="M2 4h13v2H2z" fill="#3d8fd6"/><path d="M2 8h7v9H2z" fill="#e5ac2f"/><path d="M8 13l3 3 6-7" fill="none" stroke="#3fae5a" stroke-width="2.5"/></svg></div>
      <div class="seg s-full"><svg viewBox="0 0 18 14"><path d="M.5.5h17v13H.5zM4 10l4-4M4 7v3h3M14 4l-3 3M11 4h3v3"/></svg></div>
      <div class="seg s-menu"><span></span><span></span><span></span></div>
    </div>
  </footer>
</body>
</html>
```

FILE: styles.css
```css
* {
  box-sizing: border-box;
}

html, body {
  margin: 0;
  padding: 0;
}

body {
  width: 1857px;
  height: 1079px;
  overflow: hidden;
  background: #222933;
  color: #d5d9de;
  font-family: "Liberation Sans", Arial, sans-serif;
  font-size: 12px;
  display: flex;
  flex-direction: column;
}

.defs {
  position: absolute;
}

i {
  font-style: normal;
}

/* small triangle used on every dropdown */
.tri {
  display: inline-block;
  width: 0;
  height: 0;
  border-left: 3px solid transparent;
  border-right: 3px solid transparent;
  border-top: 4px solid #747d8a;
}

.tri.light {
  border-top-color: #c5cad0;
}

.tri.small {
  border-left-width: 2px;
  border-right-width: 2px;
  border-top: 3px solid #aeb4bc;
}

.tri.dim {
  border-top-color: #6d7581;
}

.tri.grey {
  border-top-color: #777;
}

.push {
  margin-left: auto;
}

/* title bar */
.titlebar {
  height: 24px;
  display: flex;
  align-items: center;
  flex: none;
}

.tb-left {
  width: 681px;
  display: flex;
  align-items: center;
  flex: none;
  height: 100%;
}

.logo-a {
  margin-left: 2px;
  font-size: 20px;
  font-weight: bold;
  color: #d8312b;
  width: 15px;
}

.logo-lt {
  margin-left: 5px;
  margin-top: -6px;
  font-size: 9px;
  color: #e3e5e8;
}

.qat {
  display: flex;
  gap: 8px;
  margin-left: 17px;
}

.qi {
  width: 16px;
  height: 16px;
  flex: none;
}

.undo {
  margin-left: 10px;
}

.tb-left .tri.small {
  margin-left: 6px;
}

.redo {
  margin-left: 6px;
}

.qat-more {
  margin-left: 10px;
  width: 7px;
  height: 8px;
  clip-path: polygon(0 0, 100% 0, 100% 20%, 0 20%, 0 40%, 100% 40%, 50% 100%, 0 40%);
  background-color: #c5cad0;
}

.share-ic {
  margin-left: 9px;
}

.share {
  margin-left: 6px;
  color: #8fc3ec;
  font-size: 12px;
}

.tb-title {
  width: 627px;
  flex: none;
  color: #e2e5e8;
  white-space: pre;
  letter-spacing: -0.1px;
}

.tb-right {
  flex: 1;
  display: flex;
  align-items: center;
  height: 100%;
}

.tri-right {
  width: 0;
  height: 0;
  border-top: 4px solid transparent;
  border-bottom: 4px solid transparent;
  border-left: 4px solid #c5cad0;
  margin-right: 5px;
}

.search {
  width: 178px;
  height: 21px;
  margin-top: -3px;
  padding: 3px 3px;
  background: #3b4453;
  color: #aab1ba;
  font-style: italic;
  font-size: 12px;
  line-height: 16px;
  letter-spacing: -0.2px;
}

.mag {
  margin-left: 5px;
}

.user {
  margin-left: 9px;
}

.username {
  margin-left: 5px;
  width: 72px;
  color: #e2e5e8;
}

.user-tri {
  margin-left: 13px;
}

.acad {
  margin-left: 13px;
}

.tb-right .acad + .tri {
  margin-left: 4px;
}

.tb-sep {
  width: 1px;
  height: 18px;
  margin-left: 8px;
  background: #3b4453;
}

.help {
  margin-left: 9px;
  width: 16px;
  height: 16px;
  border-radius: 50%;
  background: #cfd3d8;
  color: #3b4453;
  font-weight: bold;
  font-size: 12px;
  line-height: 16px;
  text-align: center;
}

.help + .tri {
  margin-left: 9px;
}

.win-min {
  margin-left: 73px;
  width: 8px;
  height: 2px;
  margin-top: 9px;
  background: #e3e5e8;
}

.win-res {
  margin-left: 17px;
  width: 12px;
  height: 12px;
}

.win-close {
  margin-left: 12px;
  font-size: 15px;
  color: #e8eaec;
}

/* ribbon tabs */
.rtabs {
  height: 24px;
  display: flex;
  gap: 2px;
  padding-left: 3px;
  align-items: flex-end;
  flex: none;
}

.rtab {
  height: 20px;
  padding: 0 9px;
  line-height: 20px;
  color: #c5cad0;
}

.rtab.active {
  background: #3b4453;
  color: #f1f3f5;
  border-radius: 2px 2px 0 0;
}

.rtab-btn {
  height: 20px;
  margin-left: 20px;
  display: flex;
  align-items: center;
  gap: 3px;
}

.rtab-btn-box {
  width: 16px;
  height: 10px;
  background: #8e95a0;
}

/* ribbon panels */
.ribbon {
  height: 99px;
  display: flex;
  background: #3b4453;
  flex: none;
}

.panel {
  display: flex;
  flex-direction: column;
  border-right: 1px solid #2b3340;
  flex: none;
}

.p-draw { width: 221px; }
.p-modify { width: 233px; }
.p-anno { width: 189px; }
.p-layers { width: 273px; }
.p-block { width: 162px; }
.p-props { width: 265px; }
.p-groups { width: 69px; }
.p-util { width: 96px; }
.p-clip { width: 82px; border-right: none; }

.p-modify .panel-body { padding-left: 6px; }

.panel-body {
  height: 79px;
  display: flex;
}

.panel-title {
  height: 20px;
  line-height: 20px;
  text-align: center;
  color: #d5d9de;
  position: relative;
}

.panel-title .tri {
  margin-left: 3px;
  vertical-align: 1px;
}

.corner {
  position: absolute;
  right: 8px;
  top: 1px;
  font-size: 9px;
  color: #aab1ba;
}

.big {
  display: flex;
  flex-direction: column;
  align-items: center;
  padding-top: 7px;
  color: #737c89;
  flex: none;
  white-space: nowrap;
}

.big svg {
  width: 32px;
  height: 32px;
  flex: none;
}

.big > span {
  margin-top: 4px;
  line-height: 15px;
  height: 15px;
}

.big > .two {
  height: 30px;
  text-align: center;
}

.big-tri {
  margin-top: 4px;
}

.big > .big-a {
  font-size: 36px;
  line-height: 41px;
  height: 36px;
  margin-top: -3px;
  color: #7a8390;
}

.big svg, .tool svg {
  fill: none;
  stroke: #737c89;
  stroke-width: 1;
  overflow: visible;
}

svg .solid {
  fill: #737c89;
  stroke: none;
}

svg .panelfill {
  fill: #3b4453;
  stroke: none;
}

svg .panelline {
  stroke: #3b4453;
  fill: none;
}

svg .lit {
  stroke: #9aa1ab;
}

.col {
  display: flex;
  flex-direction: column;
  padding-top: 5px;
  flex: none;
}

.w-36 { width: 36px; }
.w-42 { width: 42px; }
.w-44 { width: 44px; }
.w-46 { width: 46px; }
.w-48 { width: 48px; }
.w-56 { width: 56px; }
.w-57 { width: 57px; }
.w-58 { width: 58px; }
.w-63 { width: 63px; }
.w-64 { width: 64px; }
.w-66 { width: 66px; }
.w-69 { width: 69px; }
.w-70 { width: 70px; }
.w-112 { width: 112px; }
.w-199 { width: 199px; }
.w-207 { width: 207px; }

.ml-1 { margin-left: 1px; }
.ml-2 { margin-left: 2px; }
.ml-3 { margin-left: 3px; }
.ml-7 { margin-left: 7px; }
.ml-8 { margin-left: 8px; }

.p-draw .col {
  padding-left: 6px;
}

.p-draw .tool .tri {
  margin-right: 5px;
}

.tool {
  height: 24px;
  display: flex;
  align-items: center;
  color: #737c89;
  white-space: nowrap;
}

.tool svg {
  width: 16px;
  height: 16px;
  flex: none;
}

.tool span {
  margin-left: 5px;
}

.tool .tri.push {
  margin-right: 4px;
}

.rcombo {
  height: 21px;
  flex: 1;
  display: flex;
  align-items: center;
  padding: 0 5px;
  background: #434d5e;
  border: 1px solid #2b3340;
  color: #828a96;
}

.rcombo.off {
  background: #3b4453;
  border-color: #343d4b;
  color: #737c89;
}

.layer-combo {
  flex: none;
  background: #353e4c;
  color: #737c89;
  gap: 4px;
  margin-top: 1px;
  margin-bottom: 2px;
}

.bulb {
  width: 14px;
  height: 15px;
}

.tool .swatch, .rcombo .swatch {
  width: 14px;
  height: 14px;
  display: inline-block;
  margin: 0;
}

.rcombo .swatch.yellow {
  background: #b39128;
  margin-left: 2px;
}

.rcombo .swatch.brown {
  width: 16px;
  height: 16px;
  background: #6f6239;
  border: 1px solid #565a52;
}

.rcombo .rcombo-text {
  margin-left: 3px;
}

.layer-combo .rcombo-text {
  margin-left: 0;
}

.tool .ln {
  width: 62px;
  height: 1px;
  background: #aab1ba;
  margin: 0;
}

.rcombo .tri.push {
  margin-right: 0;
}

.layer-row {
  gap: 8px;
  padding-left: 6px;
}

.layer-row span {
  margin-left: -5px;
}

.combo-row {
  gap: 2px;
}

.tool .wheel {
  width: 16px;
  height: 16px;
  margin: 0;
  border-radius: 50%;
  flex: none;
  background: conic-gradient(#f4c542, #e8873a, #d9474b, #b14bb8, #5a6fe0, #4ab5d8, #58c06a, #f4c542);
}

/* drawing tabs */
.doctabs {
  height: 30px;
  flex: none;
  display: flex;
  align-items: flex-start;
  padding: 5px 0 0 21px;
  gap: 2px;
  border-bottom: 4px solid #3b4453;
}

.doctab {
  height: 21px;
  line-height: 21px;
  border-radius: 6px 6px 0 0;
  background: #2b3340;
  color: #aeb4bc;
  white-space: nowrap;
}

.doctab.start {
  width: 121px;
  padding-left: 10px;
}

.doctab.current {
  width: 174px;
  padding-left: 10px;
  background: #3b4453;
  color: #f1f3f5;
  font-weight: bold;
}

.doc-x {
  margin-left: 7px;
  color: #aeb4bc;
  font-weight: normal;
  font-size: 12px;
}

.doctab.plus {
  width: 24px;
  margin-left: 6px;
  text-align: center;
  font-size: 16px;
  font-weight: bold;
  color: #aeb4bc;
  background: #2b3340;
}

/* main area */
.workspace {
  height: 873px;
  flex: none;
  display: flex;
}

.palette {
  width: 22px;
  height: 870px;
  background: #3b4453;
  position: relative;
  display: flex;
  align-items: center;
  justify-content: center;
  flex: none;
}

.palette.right {
  height: 873px;
}

.grip {
  position: absolute;
  top: 7px;
  left: 5px;
  width: 11px;
  height: 3px;
  background: repeating-linear-gradient(90deg, #c5cad0 0 1px, transparent 1px 2px);
}

.grip.wide {
  position: static;
  width: 17px;
  height: 4px;
}

.palette-name {
  writing-mode: vertical-rl;
  transform: rotate(180deg);
  color: #c5cad0;
}

.center {
  flex: 1;
  display: flex;
  flex-direction: column;
  min-width: 0;
}

.canvas {
  height: 805px;
  flex: none;
  background: #212830;
  position: relative;
}

.drawing {
  display: block;
  width: 1813px;
  height: 805px;
}

.white {
  fill: none;
  stroke: #cdd1d6;
  stroke-width: 1.2;
}

.yel {
  fill: none;
  stroke: #cca318;
  stroke-width: 1.3;
}

.dim {
  fill: #cca318;
  font-family: "Liberation Mono", monospace;
  font-size: 18px;
}

.mid {
  text-anchor: middle;
}

.note {
  fill: #d0a515;
  font-family: "Liberation Mono", monospace;
  font-size: 15px;
  text-anchor: middle;
}

.ucs {
  fill: none;
  stroke: #e6e8ea;
  stroke-width: 1;
}

.ucs text {
  fill: #e6e8ea;
  stroke: none;
  font-size: 18px;
  font-family: "Liberation Sans", Arial, sans-serif;
  text-anchor: middle;
}

/* viewport buttons */
.vp-controls {
  position: absolute;
  right: 13px;
  top: 9px;
  display: flex;
  align-items: center;
  gap: 9px;
}

.vp-min {
  width: 10px;
  height: 2px;
  background: #e3e5e8;
  margin-right: 1px;
}

.vp-res {
  width: 11px;
  height: 11px;
}

.vp-close {
  font-weight: bold;
  font-size: 13px;
  color: #e8eaec;
  margin-left: 1px;
}

.navbar {
  position: absolute;
  left: 1774px;
  top: 27px;
  width: 32px;
  height: 132px;
  background: #565f69;
  border-radius: 4px;
  display: flex;
  flex-direction: column;
  align-items: center;
  gap: 3px;
  padding-top: 20px;
}

.nav-x, .nav-end {
  position: absolute;
  right: 3px;
  width: 9px;
  height: 9px;
  line-height: 9px;
  text-align: center;
  font-size: 10px;
  border-radius: 50%;
  background: #6d7680;
  color: #3f4750;
}

.nav-x {
  top: 3px;
}

.nav-end {
  bottom: 3px;
}

.nav-ic {
  width: 26px;
  height: 26px;
  fill: none;
  stroke: #727b85;
  stroke-width: 1.2;
  flex: none;
}

.nav-ic text {
  fill: #3e566f;
  stroke: none;
  font-size: 9px;
  font-weight: bold;
}

.nav-tri {
  margin-top: 5px;
  border-top-color: #444c55;
}

/* save dialog */
.dlg {
  position: absolute;
  left: 1038px;
  top: 99px;
  width: 642px;
  height: 505px;
  background: #f0f0f0;
  color: #111;
  font-size: 11.5px;
  letter-spacing: -0.45px;
}

.dlg-title {
  height: 30px;
  background: #fff;
  display: flex;
  align-items: center;
  padding-left: 10px;
  font-size: 12px;
  letter-spacing: 0;
  position: relative;
}

.dlg-logo {
  width: 14px;
  height: 14px;
  margin-right: 6px;
  background: #fbe4e2;
  color: #c9302c;
  font-weight: bold;
  font-size: 14px;
  line-height: 14px;
  text-align: center;
}

.dlg-close {
  position: absolute;
  right: 8px;
  top: 9px;
  width: 12px;
  height: 12px;
}

.dlg-top {
  height: 36px;
  display: flex;
  align-items: center;
  padding-bottom: 4px;
}

.savein {
  width: 118px;
  text-align: right;
  margin-right: 11px;
  margin-top: 2px;
}

.combo {
  height: 20px;
  display: flex;
  align-items: center;
  padding-left: 3px;
  border: 1px solid #7a7a7a;
  background: #fff;
  white-space: nowrap;
}

.combo.grey {
  width: 245px;
  height: 22px;
  margin-top: 6px;
  background: #e3e3e3;
  border-color: #a3a3a3;
  padding-left: 6px;
}

.combo.focus {
  background: #cce4f7;
  border-color: #005a9e;
  padding-left: 3px;
}

.fold {
  width: 13px;
  height: 16px;
  margin-right: 2px;
}

.chev {
  width: 9px;
  height: 6px;
  margin-left: auto;
  margin-right: 4px;
  flex: none;
}

.dt-ic {
  width: 16px;
  height: 16px;
  margin-left: 10px;
  flex: none;
}

.dt-ic.back {
  margin-left: 11px;
}

.dt-menu {
  margin-left: 9px;
}

.dt-menu.views {
  margin-left: 40px;
}

.dt-tri {
  width: 0;
  height: 0;
  margin-left: 14px;
  border-left: 4px solid transparent;
  border-right: 4px solid transparent;
  border-top: 4px solid #222;
}

.dt-tri + .dt-menu {
  margin-left: 10px;
}

.dlg-main {
  display: flex;
  padding-left: 5px;
}

.places {
  width: 114px;
  height: 426px;
  flex: none;
  background: #bccbdb;
  border: 2px solid;
  border-color: #9fa3a8 #fafafa #fafafa #9fa3a8;
  padding-top: 2px;
  letter-spacing: -0.3px;
}

.place {
  height: 60px;
  display: flex;
  flex-direction: column;
  align-items: center;
}

.place svg {
  width: 32px;
  height: 32px;
  flex: none;
}

.place span {
  margin-top: 10px;
  line-height: 14px;
  white-space: nowrap;
}

.dlg-right {
  margin-left: 10px;
  width: 513px;
}

.browse {
  height: 344px;
  display: flex;
}

.filelist {
  width: 242px;
  flex: none;
}

.list {
  height: 329px;
  background: #fff;
  padding-left: 4px;
}

.list-head {
  height: 24px;
  padding: 5px 0 0 2px;
  line-height: 14px;
  font-size: 12px;
  position: relative;
}

.sort {
  position: absolute;
  left: 132px;
  top: -2px;
  font-size: 10px;
  color: #666;
}

.row {
  height: 19px;
  display: flex;
  align-items: center;
  white-space: nowrap;
}

.row svg {
  width: 14px;
  height: 16px;
  margin: 0 3px 0 5px;
  flex: none;
}

.row.sel {
  background: #d9d9d9;
  letter-spacing: -0.2px;
}

.hscroll {
  height: 15px;
  background: #f0f0f0;
  display: flex;
  align-items: center;
  position: relative;
  padding: 0 6px;
}

.sc-arrow {
  width: 6px;
  height: 9px;
}

.sc-arrow.right {
  margin-left: auto;
}

.sc-thumb {
  position: absolute;
  left: 17px;
  top: 0;
  width: 72px;
  height: 15px;
  background: #cdcdcd;
}

.side {
  width: 254px;
  margin-left: 10px;
  padding-top: 3px;
  flex: none;
}

.group {
  margin: 0;
  padding: 0 5px;
  border: 1px solid #dcdcdc;
  width: 254px;
}

.group legend {
  padding: 0 2px;
  margin-left: 0;
  font-size: 11.5px;
  line-height: 14px;
}

.group.preview {
  height: 196px;
}

.group.options {
  height: 128px;
  margin-top: 4px;
}

.thumb {
  display: block;
  width: 242px;
  height: 105px;
  margin-top: 36px;
}

.check {
  display: flex;
  gap: 3px;
  margin-top: 19px;
  margin-left: 5px;
  line-height: 13px;
}

.box {
  width: 13px;
  height: 13px;
  background: #fff;
  border: 1px solid #333;
  flex: none;
}

.form-row {
  display: flex;
  align-items: center;
  margin-top: 12px;
  height: 20px;
}

.form-row.first {
  margin-top: 33px;
}

.form-row label {
  width: 77px;
  padding-left: 2px;
  margin-top: -5px;
}

.form-row .type-label {
  margin-top: -7px;
}

.form-row .combo {
  width: 340px;
}

.btn {
  width: 80px;
  height: 20px;
  margin-left: 5px;
  background: #e1e1e1;
  border: 1px solid #adadad;
  font: inherit;
  color: #111;
  padding: 0;
  margin-top: -2px;
}

.btn.up {
  margin-top: -3px;
}

.dropdown {
  position: absolute;
  left: 206px;
  top: 496px;
  width: 340px;
  height: 196px;
  margin: 0;
  padding: 0;
  list-style: none;
  background: #fff;
  border: 1px solid #1c5a8c;
  box-shadow: 2px 2px 3px rgba(0, 0, 0, 0.5);
}

.dropdown li {
  height: 13px;
  line-height: 13px;
  padding-left: 2px;
  white-space: nowrap;
  letter-spacing: -0.4px;
}

.dropdown li.on {
  background: #0078d7;
  color: #fff;
}

/* command line */
.cmd {
  height: 68px;
  flex: none;
  display: flex;
  margin: 0 4px 0 2px;
  border-top: 3px solid #3b4453;
}

.cmd-tools {
  width: 25px;
  flex: none;
  background: #2d3542;
  display: flex;
  flex-direction: column;
  align-items: center;
  gap: 9px;
  padding-top: 6px;
}

.cmd-tools svg {
  width: 13px;
  height: 13px;
}

.cmd-tools svg + svg {
  width: 16px;
  height: 16px;
  margin-top: 3px;
}

.cmd-main {
  flex: 1;
  display: flex;
  flex-direction: column;
}

.cmd-history {
  height: 44px;
  background: #c8c8c8;
  color: #111;
  font-family: "Liberation Mono", monospace;
  font-size: 11.5px;
  line-height: 15px;
  padding: 13px 0 0 2px;
}

.cmd-input {
  height: 21px;
  background: #fff;
  color: #111;
  display: flex;
  align-items: center;
  padding-left: 4px;
  font-size: 11px;
}

.cmd-input svg {
  width: 16px;
  height: 12px;
}

.cmd-input .tri {
  margin-left: 3px;
}

.cmd-input span {
  margin-left: 3px;
}

/* status bar */
.status {
  height: 29px;
  flex: none;
  display: flex;
  justify-content: space-between;
}

.layout-tabs {
  display: flex;
  padding: 2px 0 0 10px;
  height: 21px;
}

.ltab {
  height: 17px;
  line-height: 17px;
  width: 62px;
  text-align: center;
  background: #2b3340;
  color: #9ca3ac;
  clip-path: polygon(0 0, 100% 0, 92% 100%, 8% 100%);
}

.ltab.model {
  width: 60px;
  background: #3b4453;
  color: #f1f3f5;
  font-weight: bold;
}

.ltab.plus {
  width: 24px;
  margin-left: 3px;
  font-size: 15px;
  font-weight: bold;
}

.segs {
  display: flex;
  gap: 2px;
  padding: 3px 2px 2px 0;
}

.seg {
  height: 24px;
  background: #3b4453;
  display: flex;
  align-items: center;
  color: #d5d9de;
  flex: none;
}

.seg svg {
  width: 16px;
  height: 16px;
  fill: none;
  stroke: #c5cad0;
  stroke-width: 1;
  flex: none;
}

.seg svg .fillit {
  fill: #c5cad0;
  stroke: none;
}

.s-coord {
  width: 140px;
  justify-content: flex-end;
  padding-right: 8px;
  font-size: 11.5px;
  letter-spacing: 0.1px;
}

.s-model {
  width: 47px;
  justify-content: center;
  font-size: 11.5px;
  padding-right: 3px;
}

.s-grid {
  width: 64px;
  gap: 8px;
  padding-left: 2px;
}

.s-ortho {
  width: 104px;
  gap: 5px;
}

.osnap {
  margin-left: 6px;
}

.on-box {
  width: 24px;
  height: 24px;
  background: #6a9ac9;
  display: flex;
  align-items: center;
  justify-content: center;
  flex: none;
}

.on-box svg {
  stroke: #f2f4f6;
}

.on-box svg .fillit {
  fill: #f2f4f6;
}

.s-snap {
  width: 64px;
  gap: 1px;
  margin-left: -1px;
}

.s-snap .tri {
  margin-left: 5px;
}

.s-anno {
  width: 106px;
  gap: 5px;
}

.scale {
  font-size: 11px;
  margin-left: 5px;
}

.s-gear {
  width: 40px;
  gap: 7px;
  padding-left: 4px;
}

.s-plus {
  width: 25px;
  justify-content: center;
}

.s-units {
  width: 96px;
  padding-left: 8px;
}

.s-units svg {
  width: 9px;
  height: 20px;
}

.s-units span {
  margin-left: 12px;
}

.s-units .tri {
  margin-left: 13px;
}

.s-iso {
  width: 27px;
  justify-content: center;
}

.s-iso svg {
  width: 22px;
  height: 18px;
}

.s-hw {
  width: 23px;
  background: #59697e;
  justify-content: center;
}

.hw {
  width: 18px;
  height: 18px;
  border-radius: 50%;
  background: #7f8b99;
  border: 1px solid #a7b0ba;
}

.s-ok {
  width: 20px;
  justify-content: center;
}

.s-ok svg {
  width: 18px;
  height: 18px;
}

.s-full {
  width: 28px;
  justify-content: center;
}

.s-full svg {
  width: 18px;
  height: 14px;
}

.s-menu {
  width: 22px;
  flex-direction: column;
  justify-content: center;
  gap: 5px;
  padding: 0 2px;
}

.s-menu span {
  width: 100%;
  height: 2px;
  background: #d5d9de;
}
```
